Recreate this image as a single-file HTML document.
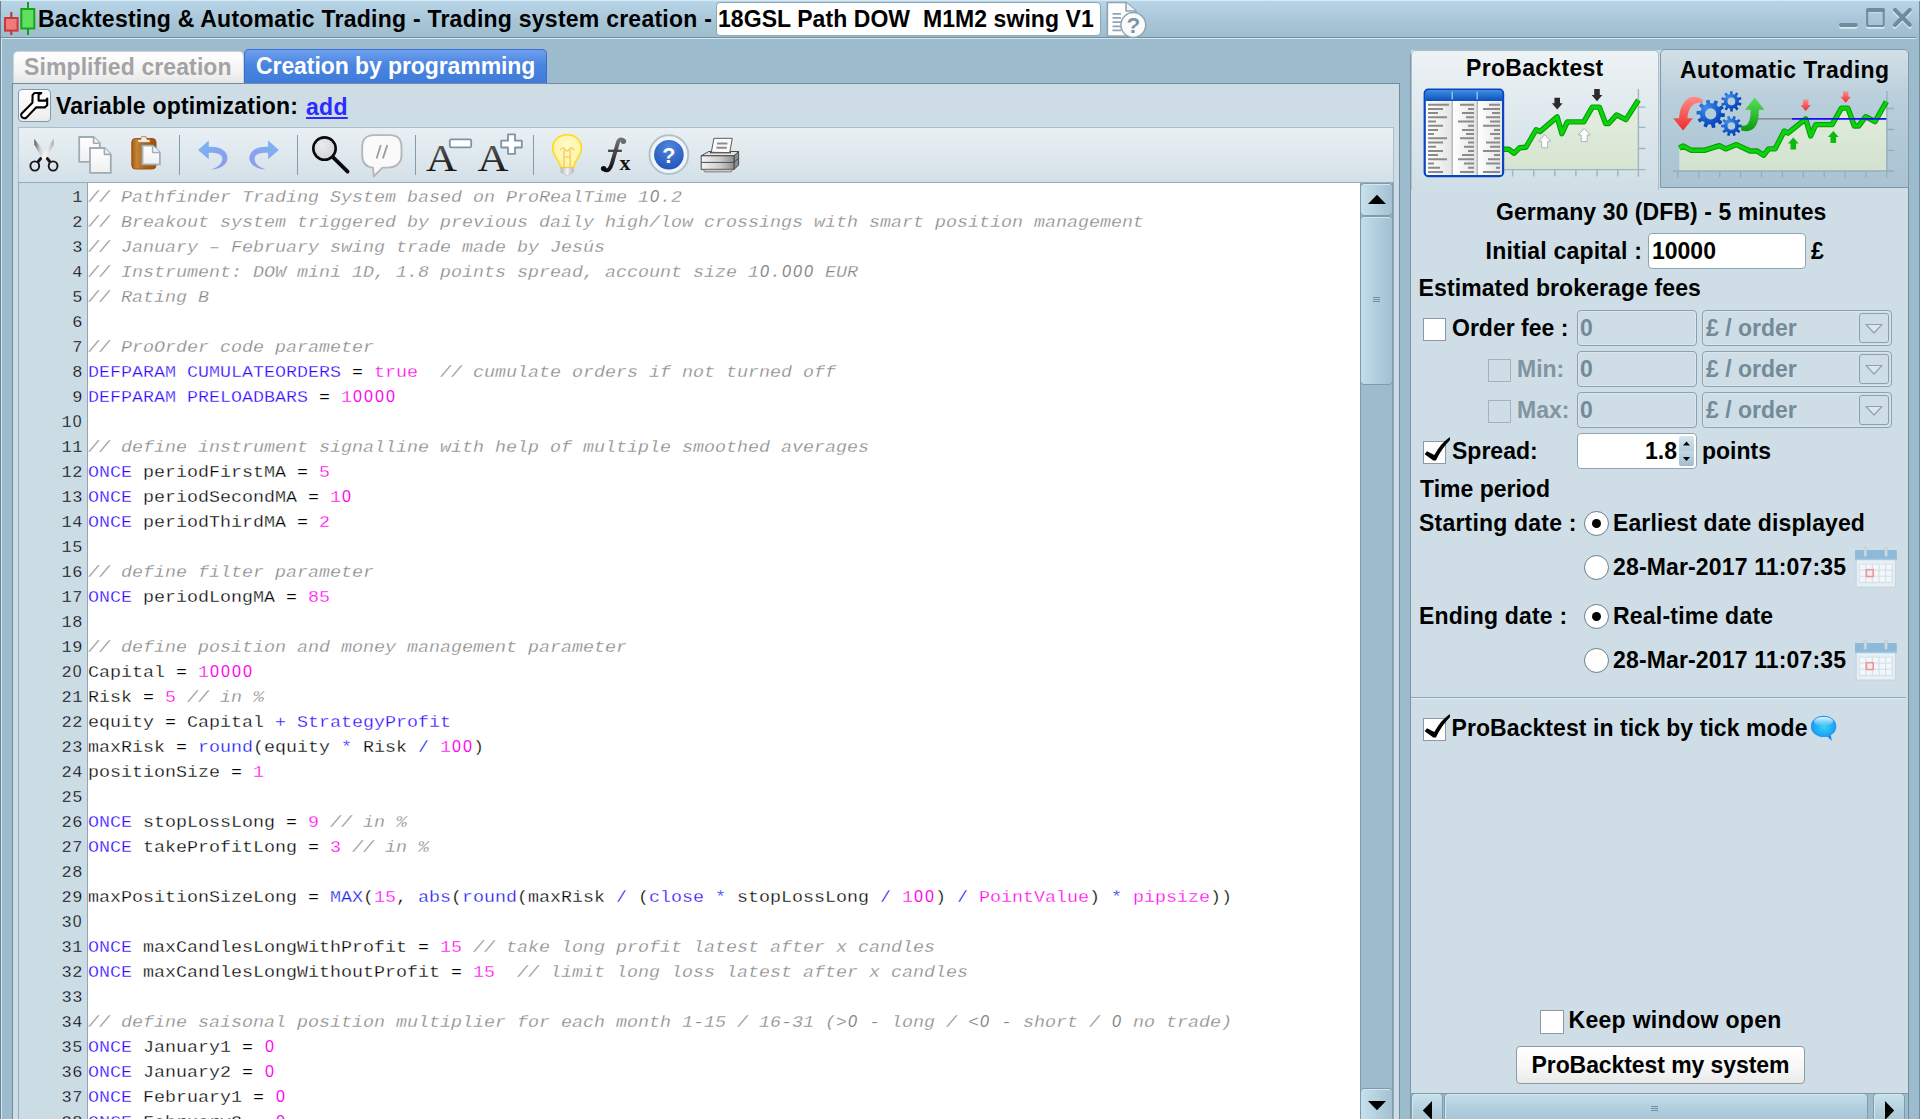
<!DOCTYPE html>
<html><head><meta charset="utf-8"><title>Backtesting</title>
<style>
*{box-sizing:border-box;margin:0;padding:0}
html,body{width:1920px;height:1119px;overflow:hidden;background:#9cbbcc;font-family:"Liberation Sans",sans-serif;}
.abs{position:absolute}
.b{font-weight:bold;font-size:23px;color:#000;white-space:pre;position:absolute;line-height:26px;height:26px}
#titlebar{position:absolute;left:0;top:0;width:1920px;height:37px;background:linear-gradient(#b9d7e9 0%,#b4d2e4 15%,#a8c6d8 55%,#9dbdcc 100%);}
#titleline{position:absolute;left:0;top:37px;width:1920px;height:1px;background:#748c9c}
#titleline2{position:absolute;left:0;top:38px;width:1920px;height:1px;background:#d2e9f4}
#lpanel{position:absolute;left:12px;top:83px;width:1388px;height:1040px;background:#cedde5;border:1px solid #728c9b;border-top-color:#758e9d}
#toolbar{position:absolute;left:18px;top:127px;width:1376px;height:56px;border:1px solid #a9bfcc;border-bottom:none;background:linear-gradient(#e9f0f4,#d3e0e7)}
#editor{position:absolute;left:18px;top:182px;width:1376px;height:940px;border:1px solid #94adbb;background:#fff}
#gutter{position:absolute;left:19px;top:183px;width:69px;height:940px;background:#ccdce4;border-right:1px solid #8da7b6}
.ln{position:absolute;left:19px;width:64px;text-align:right;font-family:"Liberation Mono",monospace;font-size:17px;line-height:25px;height:25px;color:#000;letter-spacing:0.6px;-webkit-text-stroke:0.3px #ccdce4;paint-order:fill stroke}
.cl{position:absolute;left:88px;font-family:"Liberation Mono",monospace;font-size:18.33px;line-height:25px;height:25px;white-space:pre;color:#000;transform:scaleY(0.86);transform-origin:0 17.4px;-webkit-text-stroke:0.3px #fff;paint-order:fill stroke}
.zl{display:inline-block;width:10.2px;margin-right:0.6px;text-align:center;font-family:"Liberation Sans",sans-serif;font-size:16.6px;line-height:1;letter-spacing:0;transform:scaleX(0.95)}
.z{display:inline-block;width:11px;text-align:center;font-family:"Liberation Sans",sans-serif;font-size:19.2px;line-height:1;transform:scaleX(0.84);-webkit-text-stroke:0 transparent}
.c{color:#858585;font-style:italic}
.k{color:#3208ff}
.f{color:#1616f2}
.n{color:#ff04ee}
#rpanel{position:absolute;left:1411px;top:50px;width:497px;height:1075px;background:#cfdee6}
</style></head><body>
<!-- TITLE BAR -->
<div id="titlebar"></div><div id="titleline"></div><div id="titleline2"></div>
<div class="abs" style="left:0;top:0;width:1px;height:1119px;background:#69828f"></div>
<div class="abs" style="left:1px;top:38px;width:1px;height:1081px;background:#cfeaf6"></div>
<svg class="abs" style="left:0;top:0" width="40" height="38" viewBox="0 0 40 38">
 <rect x="10.3" y="12" width="2" height="23" fill="#c23030"/>
 <rect x="5" y="18" width="12.6" height="12.6" fill="#f27a7a" stroke="#c73a3a" stroke-width="2"/>
 <rect x="27" y="2" width="2" height="33" fill="#14a014"/>
 <rect x="21.3" y="9" width="13" height="19.5" fill="#5fe05f" stroke="#18a318" stroke-width="2"/>
</svg>
<div class="b" id="ttl" style="left:38px;top:6px;letter-spacing:0.24px">Backtesting &amp; Automatic Trading - Trading system creation -</div>
<div class="abs" style="left:716px;top:2px;width:385px;height:34px;background:#fff;border:1px solid #8ea6b4;border-radius:4px"></div>
<div class="b" style="left:718px;top:6px;letter-spacing:0.06px">18GSL Path DOW  M1M2 swing V1</div>
<!-- doc-help icon -->
<svg class="abs" style="left:1100px;top:0" width="56" height="40" viewBox="1100 0 56 40">
 <path d="M1107.3 2.5 H1126 L1136 11 V36 H1107.3 Z" fill="#fdfdfd" stroke="#8fa5b2" stroke-width="1.7" stroke-linejoin="round"/>
 <path d="M1126 2.5 V11 H1136" fill="#eef2f4" stroke="#8fa5b2" stroke-width="1.6" stroke-linejoin="round"/>
 <g stroke="#8fa5b2" stroke-width="1.7"><path d="M1112.5 13.8H1121M1112.5 17.9H1121M1112.5 22.1H1121M1112.5 26.3H1121M1112.5 30.4H1121"/></g>
 <circle cx="1133.3" cy="25" r="12.4" fill="#fbfbfb" stroke="#8fa5b2" stroke-width="1.5"/>
 <text x="1133.4" y="33.2" font-family="Liberation Sans" font-weight="bold" font-size="22.5" fill="#7d95a3" text-anchor="middle">?</text>
</svg>
<!-- window buttons -->
<svg class="abs" style="left:1830px;top:0" width="90" height="38" viewBox="1830 0 90 38">
 <g transform="translate(0,1.7)" fill="#d6ebf5" stroke="#d6ebf5">
  <rect x="1839" y="23" width="18.8" height="4" rx="2" stroke="none"/>
  <rect x="1867.2" y="9.6" width="16.5" height="16.4" rx="1.5" fill="none" stroke-width="2.2"/>
  <path d="M1895 9.9 L1909.8 25 M1909.8 9.9 L1895 25" stroke-width="4" stroke-linecap="round" fill="none"/>
 </g>
 <rect x="1839" y="23" width="18.8" height="4.1" rx="2" fill="#728b9b"/>
 <rect x="1867.2" y="9.6" width="16.5" height="16.4" rx="1.5" fill="none" stroke="#728b9b" stroke-width="2.2"/>
 <rect x="1866.1" y="8.1" width="18.7" height="4" rx="1.5" fill="#728b9b"/>
 <path d="M1895 9.9 L1909.8 25 M1909.8 9.9 L1895 25" stroke="#728b9b" stroke-width="4" stroke-linecap="round"/>
</svg>
<div class="abs" style="left:1919px;top:0;width:1px;height:1119px;background:#728d9e"></div>
<div class="abs" style="left:1916px;top:37px;width:3px;height:2px;background:#a3c0d2"></div>
<div class="abs" style="left:0;top:0;width:1920px;height:1px;background:#d3eaf6"></div>
<!-- LEFT TABS -->
<div class="abs" style="left:13px;top:51px;width:231px;height:32px;border:1px solid #c9d3d9;border-bottom:none;border-radius:5px 5px 0 0;background:linear-gradient(#ffffff,#f4f4f4 60%,#e6e6e6)"></div>
<div class="b" style="left:24px;top:54px;color:#a3a3a3;letter-spacing:0.1px">Simplified creation</div>
<div class="abs" style="left:244px;top:49px;width:303px;height:34px;border:1px solid #3a6fd0;border-bottom:none;border-radius:5px 5px 0 0;background:linear-gradient(#6ea0ee,#4a85e0 45%,#3f7bda)"></div>
<div class="b" style="left:256px;top:53px;color:#fff;letter-spacing:-0.08px">Creation by programming</div>
<!-- LEFT PANEL -->
<div id="lpanel"></div>
<div class="abs" style="left:18px;top:89px;width:33px;height:33px;border:1px solid #7f9aaa;border-radius:4px;background:linear-gradient(#ffffff,#f6f6f6 50%,#ececec)"></div>
<svg class="abs" style="left:18px;top:89px" width="33" height="33" viewBox="18 89 33 33">
 <path d="M21.7 113.5 L32.4 102.8 L32.6 95 L34.6 93 L41.3 93 L38.6 94.6 L38.6 100.6 L45.6 100.6 L47.2 98.6 L47.2 105.3 L44.7 107.4 L36.3 107.2 L26.4 117.6 C24.5 119 22 118 21.3 116 C21 115 21.2 114 21.7 113.5 Z" fill="#fff" stroke="#000" stroke-width="2.1" stroke-linejoin="round"/>
</svg>
<div class="b" style="left:56px;top:93px;letter-spacing:0.2px">Variable optimization:</div>
<div class="b" style="left:306px;top:94px;color:#2b2bff;text-decoration:underline;letter-spacing:0.3px">add</div>
<div id="toolbar"></div>
<div id="editor"></div>
<div id="gutter"></div>
<div class="ln" style="top:185px">1</div><div class="cl" style="top:185px"><span class="c">// Pathfinder Trading System based on ProRealTime 1<span class="z">0</span>.2</span></div>
<div class="ln" style="top:210px">2</div><div class="cl" style="top:210px"><span class="c">// Breakout system triggered by previous daily high/low crossings with smart position management</span></div>
<div class="ln" style="top:235px">3</div><div class="cl" style="top:235px"><span class="c">// January – February swing trade made by Jesús</span></div>
<div class="ln" style="top:260px">4</div><div class="cl" style="top:260px"><span class="c">// Instrument: DOW mini 1D, 1.8 points spread, account size 1<span class="z">0</span>.<span class="z">0</span><span class="z">0</span><span class="z">0</span> EUR</span></div>
<div class="ln" style="top:285px">5</div><div class="cl" style="top:285px"><span class="c">// Rating B</span></div>
<div class="ln" style="top:310px">6</div><div class="cl" style="top:310px"></div>
<div class="ln" style="top:335px">7</div><div class="cl" style="top:335px"><span class="c">// ProOrder code parameter</span></div>
<div class="ln" style="top:360px">8</div><div class="cl" style="top:360px"><span class="k">DEFPARAM</span> <span class="k">CUMULATEORDERS</span> = <span class="n">true</span>  <span class="c">// cumulate orders if not turned off</span></div>
<div class="ln" style="top:385px">9</div><div class="cl" style="top:385px"><span class="k">DEFPARAM</span> <span class="k">PRELOADBARS</span> = <span class="n">1<span class="z">0</span><span class="z">0</span><span class="z">0</span><span class="z">0</span></span></div>
<div class="ln" style="top:410px">1<span class="zl">0</span></div><div class="cl" style="top:410px"></div>
<div class="ln" style="top:435px">11</div><div class="cl" style="top:435px"><span class="c">// define instrument signalline with help of multiple smoothed averages</span></div>
<div class="ln" style="top:460px">12</div><div class="cl" style="top:460px"><span class="k">ONCE</span> periodFirstMA = <span class="n">5</span></div>
<div class="ln" style="top:485px">13</div><div class="cl" style="top:485px"><span class="k">ONCE</span> periodSecondMA = <span class="n">1<span class="z">0</span></span></div>
<div class="ln" style="top:510px">14</div><div class="cl" style="top:510px"><span class="k">ONCE</span> periodThirdMA = <span class="n">2</span></div>
<div class="ln" style="top:535px">15</div><div class="cl" style="top:535px"></div>
<div class="ln" style="top:560px">16</div><div class="cl" style="top:560px"><span class="c">// define filter parameter</span></div>
<div class="ln" style="top:585px">17</div><div class="cl" style="top:585px"><span class="k">ONCE</span> periodLongMA = <span class="n">85</span></div>
<div class="ln" style="top:610px">18</div><div class="cl" style="top:610px"></div>
<div class="ln" style="top:635px">19</div><div class="cl" style="top:635px"><span class="c">// define position and money management parameter</span></div>
<div class="ln" style="top:660px">2<span class="zl">0</span></div><div class="cl" style="top:660px">Capital = <span class="n">1<span class="z">0</span><span class="z">0</span><span class="z">0</span><span class="z">0</span></span></div>
<div class="ln" style="top:685px">21</div><div class="cl" style="top:685px">Risk = <span class="n">5</span> <span class="c">// in %</span></div>
<div class="ln" style="top:710px">22</div><div class="cl" style="top:710px">equity = Capital <span class="f">+</span> <span class="k">StrategyProfit</span></div>
<div class="ln" style="top:735px">23</div><div class="cl" style="top:735px">maxRisk = <span class="f">round</span>(equity <span class="f">*</span> Risk <span class="f">/</span> <span class="n">1<span class="z">0</span><span class="z">0</span></span>)</div>
<div class="ln" style="top:760px">24</div><div class="cl" style="top:760px">positionSize = <span class="n">1</span></div>
<div class="ln" style="top:785px">25</div><div class="cl" style="top:785px"></div>
<div class="ln" style="top:810px">26</div><div class="cl" style="top:810px"><span class="k">ONCE</span> stopLossLong = <span class="n">9</span> <span class="c">// in %</span></div>
<div class="ln" style="top:835px">27</div><div class="cl" style="top:835px"><span class="k">ONCE</span> takeProfitLong = <span class="n">3</span> <span class="c">// in %</span></div>
<div class="ln" style="top:860px">28</div><div class="cl" style="top:860px"></div>
<div class="ln" style="top:885px">29</div><div class="cl" style="top:885px">maxPositionSizeLong = <span class="f">MAX</span>(<span class="n">15</span>, <span class="f">abs</span>(<span class="f">round</span>(maxRisk <span class="f">/</span> (<span class="k">close</span> <span class="f">*</span> stopLossLong <span class="f">/</span> <span class="n">1<span class="z">0</span><span class="z">0</span></span>) <span class="f">/</span> <span class="n">PointValue</span>) <span class="f">*</span> <span class="n">pipsize</span>))</div>
<div class="ln" style="top:910px">3<span class="zl">0</span></div><div class="cl" style="top:910px"></div>
<div class="ln" style="top:935px">31</div><div class="cl" style="top:935px"><span class="k">ONCE</span> maxCandlesLongWithProfit = <span class="n">15</span> <span class="c">// take long profit latest after x candles</span></div>
<div class="ln" style="top:960px">32</div><div class="cl" style="top:960px"><span class="k">ONCE</span> maxCandlesLongWithoutProfit = <span class="n">15</span>  <span class="c">// limit long loss latest after x candles</span></div>
<div class="ln" style="top:985px">33</div><div class="cl" style="top:985px"></div>
<div class="ln" style="top:1010px">34</div><div class="cl" style="top:1010px"><span class="c">// define saisonal position multiplier for each month 1-15 / 16-31 (&gt;<span class="z">0</span> - long / &lt;<span class="z">0</span> - short / <span class="z">0</span> no trade)</span></div>
<div class="ln" style="top:1035px">35</div><div class="cl" style="top:1035px"><span class="k">ONCE</span> January1 = <span class="n"><span class="z">0</span></span></div>
<div class="ln" style="top:1060px">36</div><div class="cl" style="top:1060px"><span class="k">ONCE</span> January2 = <span class="n"><span class="z">0</span></span></div>
<div class="ln" style="top:1085px">37</div><div class="cl" style="top:1085px"><span class="k">ONCE</span> February1 = <span class="n"><span class="z">0</span></span></div>
<div class="ln" style="top:1110px">38</div><div class="cl" style="top:1110px"><span class="k">ONCE</span> February2 = <span class="n"><span class="z">0</span></span></div>
<!-- EDITOR V-SCROLLBAR -->
<div class="abs" style="left:1360px;top:183px;width:33px;height:940px;background:#9ebbcd;border-left:1px solid #7f9aab;border-right:1px solid #7f9aab"></div>
<div class="abs" style="left:1360px;top:183px;width:33px;height:33px;border:1px solid #7f9aab;border-radius:4px;background:linear-gradient(90deg,#c6e0ec,#b5d1df 50%,#a3c1d2);box-shadow:inset 0 1px 0 #d3e7f0"></div>
<svg class="abs" style="left:1360px;top:183px" width="33" height="33"><path d="M8 21 L17 11.8 L26 21 Z" fill="#000"/></svg>
<div class="abs" style="left:1360px;top:216px;width:33px;height:169px;border:1px solid #7f9aab;border-radius:4px;background:linear-gradient(90deg,#c2ddea,#b1cedd 50%,#a2c0d1);box-shadow:inset 0 1px 0 #d3e7f0"></div>
<svg class="abs" style="left:1372px;top:295px" width="10" height="10"><path d="M1 2.5H8M1 4.5H8M1 6.5H8" stroke="#6f8fa3" stroke-width="1"/></svg>
<div class="abs" style="left:1360px;top:1088px;width:33px;height:36px;border:1px solid #7f9aab;border-radius:4px;background:linear-gradient(90deg,#c6e0ec,#b5d1df 50%,#a3c1d2);box-shadow:inset 0 1px 0 #d3e7f0"></div>
<svg class="abs" style="left:1360px;top:1088px" width="33" height="31"><path d="M8 13 L26 13 L17 22.2 Z" fill="#000"/></svg>
<!-- panel borders -->
<div class="abs" style="left:1399px;top:83px;width:1px;height:1040px;background:#728c9b"></div>
<div class="abs" style="left:1410px;top:54px;width:1px;height:1069px;background:#7d97a8"></div>
<div class="abs" style="left:1908px;top:54px;width:1px;height:1069px;background:#728c9b"></div>
<!-- TOOLBAR ICONS -->
<svg class="abs" style="left:19px;top:128px" width="740" height="54" viewBox="19 128 740 54">
 <defs>
  <linearGradient id="bladeL" x1="0" y1="0" x2="1" y2="0"><stop offset="0" stop-color="#5a5a5a"/><stop offset="0.45" stop-color="#c9c9c9"/><stop offset="1" stop-color="#ffffff"/></linearGradient>
  <linearGradient id="bladeR" x1="0" y1="0" x2="1" y2="0"><stop offset="0" stop-color="#ffffff"/><stop offset="0.6" stop-color="#e2e2e2"/><stop offset="1" stop-color="#a8a8a8"/></linearGradient>
  <linearGradient id="pg" x1="0" y1="0" x2="0" y2="1"><stop offset="0" stop-color="#ffffff"/><stop offset="1" stop-color="#f0f0f0"/></linearGradient>
  <linearGradient id="clip" x1="0" y1="0" x2="1" y2="0"><stop offset="0" stop-color="#a8580e"/><stop offset="0.2" stop-color="#c28538"/><stop offset="0.5" stop-color="#ad651a"/><stop offset="1" stop-color="#9a500b"/></linearGradient>
  <linearGradient id="ublue" x1="0" y1="0" x2="1" y2="1"><stop offset="0" stop-color="#74b8f2"/><stop offset="0.5" stop-color="#86a6f0"/><stop offset="1" stop-color="#8f98f0"/></linearGradient>
  <linearGradient id="ublue2" x1="1" y1="0" x2="0" y2="1"><stop offset="0" stop-color="#74b8f2"/><stop offset="0.5" stop-color="#86a6f0"/><stop offset="1" stop-color="#8f98f0"/></linearGradient>
  <radialGradient id="lens" cx="0.4" cy="0.35" r="0.9"><stop offset="0" stop-color="#e9ecee"/><stop offset="1" stop-color="#c4cdd2"/></radialGradient>
  <linearGradient id="agrad" x1="0" y1="0" x2="0" y2="1"><stop offset="0" stop-color="#6e6e6e"/><stop offset="1" stop-color="#000"/></linearGradient>
  <linearGradient id="fgrad" gradientUnits="userSpaceOnUse" x1="0" y1="138" x2="0" y2="172"><stop offset="0" stop-color="#767676"/><stop offset="1" stop-color="#0a0a0a"/></linearGradient>
  <radialGradient id="helpg" cx="0.5" cy="0.25" r="0.85"><stop offset="0" stop-color="#4f86dc"/><stop offset="1" stop-color="#1c4fb8"/></radialGradient>
  <linearGradient id="prn" x1="0" y1="0" x2="1" y2="0"><stop offset="0" stop-color="#f6f6f6"/><stop offset="0.6" stop-color="#c9c9c9"/><stop offset="1" stop-color="#8e8e8e"/></linearGradient>
  <radialGradient id="bulb" cx="0.5" cy="0.4" r="0.6"><stop offset="0" stop-color="#fffbd2"/><stop offset="1" stop-color="#fdf29a"/></radialGradient>
  <linearGradient id="base" x1="0" y1="0" x2="1" y2="0"><stop offset="0" stop-color="#b9b9b9"/><stop offset="0.5" stop-color="#f2f2f2"/><stop offset="1" stop-color="#b9b9b9"/></linearGradient>
 </defs>
 <!-- scissors -->
 <path d="M34.3 138.8 L34.3 144.4 L41.2 156.6 L45.4 159 L45.9 153.8 Z" fill="url(#bladeL)"/>
 <path d="M53.6 138.6 L53.7 144.4 L46.6 158.6 L42.2 159.2 L43.2 154.4 Z" fill="url(#bladeR)"/>
 <path d="M40.6 158.6 L38.2 161.6 M47.4 158.6 L49.8 161.6" stroke="#161616" stroke-width="3" stroke-linecap="round"/>
 <ellipse cx="34.8" cy="166" rx="4.4" ry="4.6" fill="none" stroke="#161616" stroke-width="1.9"/>
 <ellipse cx="53.1" cy="166" rx="4.4" ry="4.6" fill="none" stroke="#161616" stroke-width="1.9"/>
 <!-- copy -->
 <path d="M79.2 137 H93.6 L99.8 143.2 V161.8 H79.2 Z" fill="url(#pg)" stroke="#9eacb4" stroke-width="1.8"/>
 <path d="M93.6 137 V143.2 H99.8" fill="#f4f6f7" stroke="#9eacb4" stroke-width="1.6" stroke-linejoin="round"/>
 <path d="M90 148 H104.4 L110.8 154.4 V172.8 H90 Z" fill="url(#pg)" stroke="#9eacb4" stroke-width="1.8"/>
 <path d="M104.4 148 V154.4 H110.8" fill="#f4f6f7" stroke="#9eacb4" stroke-width="1.6" stroke-linejoin="round"/>
 <!-- paste -->
 <rect x="131.8" y="138.5" width="24.2" height="30.5" rx="3.6" fill="url(#clip)" stroke="#a2540a" stroke-width="1"/>
 <path d="M137.6 142.4 V139.6 H140.6 L141.6 136.6 H146 L147 139.6 H150 V142.4 Z" fill="#e9eef1" stroke="#b0651c" stroke-width=".7"/>
 <path d="M142.5 145.6 H152.6 L159.9 152.4 V164.3 H142.5 Z" fill="url(#pg)" stroke="#9fb1be" stroke-width="1.8"/>
 <path d="M152.6 145.6 V152.4 H159.9" fill="#f4f6f7" stroke="#9fb1be" stroke-width="1.5" stroke-linejoin="round"/>
 <!-- separators -->
 <g stroke="#7f9dae" stroke-width="1"><path d="M179.5 135V175M297.5 135V175M415.5 135V175M533.5 135V175"/></g>
 <!-- undo -->
 <path d="M198.1 150 L208.75 140.6 L208.75 146.8 C220 146 227.5 151 227.5 158 C227.5 165 219 169.5 210.6 169.5 C217.5 168 222.5 163.5 222.3 158.5 C222 154 216 152.5 208.75 152.8 L208.75 159.3 Z" fill="url(#ublue)"/>
 <!-- redo -->
 <path d="M278.8 150 L268.15 140.6 L268.15 146.8 C256.9 146 249.4 151 249.4 158 C249.4 165 257.9 169.5 266.3 169.5 C259.4 168 254.4 163.5 254.6 158.5 C254.9 154 260.9 152.5 268.15 152.8 L268.15 159.3 Z" fill="url(#ublue2)"/>
 <!-- magnifier -->
 <circle cx="324.5" cy="148.6" r="11.2" fill="url(#lens)" stroke="#0a0a0a" stroke-width="2.6"/>
 <path d="M333.4 157.6 L347.6 171.6" stroke="#0a0a0a" stroke-width="3.8" stroke-linecap="round"/>
 <!-- comment bubble -->
 <path d="M374 135.1 H390 C397.5 135.1 401.5 139.5 401.5 147 V155 C401.5 163 396 167.6 388 167.6 H382.5 L373.9 176.4 L373 167.6 C366 167 362.2 162.5 362.2 155 V147 C362.2 139.5 366.5 135.1 374 135.1 Z" fill="#fafafa" stroke="#b4b7ba" stroke-width="1.9" stroke-linejoin="round"/>
 <path d="M376.6 158.4 L380.8 145.1 M382.9 158.4 L387.3 145.1" stroke="#9c9c9c" stroke-width="1.8"/>
 <!-- A- -->
 <text x="426" y="171.3" font-family="Liberation Serif" font-size="38.5" fill="url(#agrad)" textLength="31" lengthAdjust="spacingAndGlyphs">A</text>
 <rect x="449.8" y="139.4" width="21.4" height="8" rx="1.5" fill="#fff" stroke="#7a96a6" stroke-width="1.8"/>
 <!-- A+ -->
 <text x="477.5" y="171.3" font-family="Liberation Serif" font-size="38.5" fill="url(#agrad)" textLength="31" lengthAdjust="spacingAndGlyphs">A</text>
 <path d="M508 134.4 H515 V140.7 H521.8 V147.5 H515 V153.8 H508 V147.5 H501.2 V140.7 H508 Z" fill="#fff" stroke="#7a96a6" stroke-width="1.8" stroke-linejoin="round"/>
 <!-- bulb -->
 <path d="M567.1 134.7 C576 134.7 581.5 141 581.5 148 C581.5 156 574.6 160 573.6 167.5 H560.6 C559.6 160 552.7 156 552.7 148 C552.7 141 558.2 134.7 567.1 134.7 Z" fill="url(#bulb)" stroke="#ffd91e" stroke-width="1.6"/>
 <path d="M559.8 149.8 C561.5 149.8 561.8 147.8 563.2 147.8 C565 147.8 565.4 151.2 567.2 151.2 C569 151.2 569.4 147.8 571.2 147.8 C572.6 147.8 572.9 149.8 574.6 149.8 M564 150 V167 M570.2 150 V167 M564 157 H570.2" stroke="#f5d568" stroke-width="1.7" fill="none"/>
 <path d="M560.9 167.8 H573.4 V172.4 L567.1 175.8 L560.9 172.4 Z" fill="url(#base)" stroke="#bdbdbd" stroke-width=".6"/>
 <!-- fx -->
 <path d="M623.2 141.6 C622.8 138.4 618.9 138.6 617.9 142.6 L611.9 163.6 C610.6 168.6 607.6 172.2 604 169.2" fill="none" stroke="url(#fgrad)" stroke-width="3.9" stroke-linecap="round"/>
 <circle cx="623.4" cy="141.3" r="2.7" fill="#6c6c6c"/><circle cx="603.6" cy="168.6" r="2.7" fill="#0a0a0a"/>
 <path d="M608 150.8 H621.8" stroke="#444" stroke-width="2.3"/>
 <text x="619.6" y="169.6" font-family="Liberation Serif" font-weight="bold" font-size="22" fill="#141414">x</text>
 <!-- help -->
 <circle cx="668.9" cy="154.7" r="19.4" fill="#f2f5f7" stroke="#b2c2cc" stroke-width="2"/>
 <circle cx="668.9" cy="154.7" r="14.8" fill="url(#helpg)"/>
 <text x="668.9" y="163" font-family="Liberation Sans" font-weight="bold" font-size="21.5" fill="#fff" text-anchor="middle">?</text>
 <!-- printer -->
 <path d="M701.2 155.8 L708.8 151.5 H738.6 L734 155.8 Z" fill="#e4e4e4" stroke="#4a4a4a" stroke-width="1" stroke-linejoin="round"/>
 <path d="M734 155.8 L738.6 151.5 V165.2 L734 169.3 Z" fill="#8c8c8c" stroke="#4a4a4a" stroke-width="1" stroke-linejoin="round"/>
 <rect x="701.2" y="155.8" width="32.8" height="13.5" fill="url(#prn)" stroke="#4a4a4a" stroke-width="1"/>
 <path d="M701.2 162.4 H734 L738.6 158.2" fill="none" stroke="#4a4a4a" stroke-width="1"/>
 <path d="M703.6 169.6 H732.4 L731.4 171.9 H704.6 Z" fill="#cfcfcf" stroke="#6a6a6a" stroke-width=".8"/>
 <path d="M710 152.6 H731" stroke="#3a3a3a" stroke-width="1.4"/>
 <path d="M711.3 152.3 L713.9 138.3 L732.3 138.3 L729.7 152.6 Z" fill="#fafafa" stroke="#5c5c5c" stroke-width="1" stroke-linejoin="round"/>
 <path d="M717 143.5 H727.4 M716.4 147.8 H726.8" stroke="#8c8c8c" stroke-width="1.9"/>
</svg>
<!-- RIGHT PANEL -->
<div id="rpanel"></div>
<!-- tabs -->
<div class="abs" style="left:1411px;top:50px;width:248px;height:140px;border:1px solid #aebfca;border-bottom:none;border-radius:5px 5px 0 0;background:linear-gradient(#edf2f5,#dfe9ee 45%,#cfdee6)"></div>
<div class="abs" style="left:1660px;top:49px;width:249px;height:139px;border:1px solid #7d98a9;border-radius:5px 5px 0 0;background:linear-gradient(#d2e0e8,#b9cfdb 35%,#a9c3d2)"></div>
<div class="b" style="left:1466px;top:55px;letter-spacing:0.3px">ProBacktest</div>
<div class="b" style="left:1680px;top:57px;letter-spacing:0.45px">Automatic Trading</div>
<!-- ProBacktest chart -->
<svg class="abs" style="left:1411px;top:50px" width="248" height="138" viewBox="1411 50 248 138">
 <defs>
  <linearGradient id="tblh" x1="0" y1="0" x2="0" y2="1"><stop offset="0" stop-color="#3f8fe0"/><stop offset="1" stop-color="#0b4fc0"/></linearGradient>
  <linearGradient id="gfill" x1="0" y1="0" x2="0" y2="1"><stop offset="0" stop-color="#e6efe2"/><stop offset="1" stop-color="#d5e4cf"/></linearGradient>
  <linearGradient id="tcol" x1="0" y1="0" x2="1" y2="0"><stop offset="0" stop-color="#ffffff"/><stop offset="1" stop-color="#e4e4e4"/></linearGradient>
 </defs>
 <path d="M1503.75 149.3 L1508.75 149.3 L1514.2 153.2 L1519.7 147.7 L1525.9 147.25 L1536.1 129.75 L1540 131.6 L1557.2 116.9 L1561.9 133.7 L1567.3 121.9 L1583.75 121.9 L1592.3 107.1 L1599.4 107.1 L1605.6 123.5 L1608.75 123.5 L1616.6 114.9 L1625.9 119.6 L1638.4 100 L1638.4 169.6 L1503.75 169.6 Z" fill="url(#gfill)"/>
 <g stroke="#9fb4c0" stroke-width="1.4" fill="none">
  <path d="M1638.4 89 V176.6"/><path d="M1504 169.6 H1645.5"/>
  <path d="M1512.6 169.6V176.6M1533.75 169.6V176.6M1554.8 169.6V176.6M1575.9 169.6V176.6M1597 169.6V176.6M1617.8 169.6V176.6"/>
  <path d="M1638.4 107.1H1645.5M1638.4 127.4H1645.5M1638.4 148.5H1645.5"/>
 </g>
 <path d="M1503.75 149.3 L1508.75 149.3 L1514.2 153.2 L1519.7 147.7 L1525.9 147.25 L1536.1 129.75 L1540 131.6 L1557.2 116.9 L1561.9 133.7 L1567.3 121.9 L1583.75 121.9 L1592.3 107.1 L1599.4 107.1 L1605.6 123.5 L1608.75 123.5 L1616.6 114.9 L1625.9 119.6 L1638.4 100" fill="none" stroke="#089c08" stroke-width="5.4" stroke-linejoin="round"/>
 <path d="M1503.75 149.3 L1508.75 149.3 L1514.2 153.2 L1519.7 147.7 L1525.9 147.25 L1536.1 129.75 L1540 131.6 L1557.2 116.9 L1561.9 133.7 L1567.3 121.9 L1583.75 121.9 L1592.3 107.1 L1599.4 107.1 L1605.6 123.5 L1608.75 123.5 L1616.6 114.9 L1625.9 119.6 L1638.4 100" fill="none" stroke="#0cd40c" stroke-width="3.2" stroke-linejoin="round"/>
 <!-- black arrows -->
 <path d="M1554.4 97.7 h5.6 v5.6 h2.6 l-5.4 6.1 l-5.4 -6.1 h2.6 z" fill="#2b2b2b"/>
 <path d="M1594.2 89.1 h5.6 v5.8 h2.6 l-5.4 6.4 l-5.4 -6.4 h2.6 z" fill="#2b2b2b"/>
 <!-- white arrows -->
 <path d="M1544.7 134.6 l6 6.6 h-3 v6.6 h-6 v-6.6 h-3 z" fill="#fff" stroke="#aab4ba" stroke-width="1"/>
 <path d="M1584.2 128.4 l6 6.6 h-3 v6.6 h-6 v-6.6 h-3 z" fill="#fff" stroke="#aab4ba" stroke-width="1"/>
 <!-- table icon -->
 <rect x="1424.7" y="89.7" width="78.4" height="86.4" rx="3.5" fill="#fff" stroke="#0a43c0" stroke-width="2.2"/>
 <path d="M1425.5 101 V93 a3 3 0 0 1 3 -3 h71 a3 3 0 0 1 3 3 V101 Z" fill="url(#tblh)"/>
 <rect x="1426" y="101.5" width="25.5" height="73" fill="url(#tcol)"/>
 <rect x="1453" y="101.5" width="23.5" height="73" fill="url(#tcol)"/>
 <rect x="1478" y="101.5" width="24" height="73" fill="url(#tcol)"/>
 <path d="M1452.2 101 V175 M1477.2 101 V175" stroke="#a9b3b9" stroke-width="1.4"/>
 <path d="M1452.2 91.5 V99.5 M1477.2 91.5 V99.5" stroke="#9cc0ec" stroke-width="1.4"/>
 <g stroke="#8b8b8b" stroke-width="2">
  <path d="M1428 104.7h21M1428 108.9h15M1428 113.1h10M1428 117.3h19M1428 121.5h8M1428 125.7h15M1428 129.9h10M1428 134.1h6M1428 138.3h19M1428 142.5h15M1428 146.7h8M1428 150.9h15M1428 155.1h10M1428 159.3h19M1428 163.5h6M1428 167.7h12M1428 171.9h15"/>
  <path d="M1474 104.7h-14M1474 108.9h-6M1474 113.1h-12M1474 117.3h-8M1474 121.5h-16M1474 125.7h-6M1474 129.9h-12M1474 134.1h-8M1474 138.3h-14M1474 142.5h-6M1474 146.7h-10M1474 150.9h-6M1474 155.1h-12M1474 159.3h-16M1474 163.5h-10M1474 167.7h-6M1474 171.9h-14"/>
  <path d="M1500 104.7h-11M1500 108.9h-17M1500 113.1h-8M1500 117.3h-14M1500 121.5h-10M1500 125.7h-17M1500 129.9h-6M1500 134.1h-10M1500 138.3h-6M1500 142.5h-14M1500 146.7h-10M1500 150.9h-17M1500 155.1h-6M1500 159.3h-12M1500 163.5h-14M1500 167.7h-4M1500 171.9h-17"/>
 </g>
</svg>
<!-- Automatic Trading chart -->
<svg class="abs" style="left:1660px;top:50px" width="249" height="138" viewBox="1660 50 249 138">
 <defs>
  <linearGradient id="gfill2" x1="0" y1="0" x2="0" y2="1"><stop offset="0" stop-color="#e3ecdf"/><stop offset="1" stop-color="#d3e2cf"/></linearGradient>
  <radialGradient id="gearg" cx="0.35" cy="0.3" r="0.9"><stop offset="0" stop-color="#3f8de8"/><stop offset="0.6" stop-color="#0b4fc4"/><stop offset="1" stop-color="#0a2f98"/></radialGradient>
  <linearGradient id="redg" x1="0" y1="0" x2="0" y2="1"><stop offset="0" stop-color="#ff8c8c"/><stop offset="1" stop-color="#f02a2a"/></linearGradient>
  <linearGradient id="grng" x1="0" y1="0" x2="0" y2="1"><stop offset="0" stop-color="#5ae05a"/><stop offset="1" stop-color="#0a9a0a"/></linearGradient>
 </defs>
 <path d="M1679.3 148.1 L1682.9 146 L1691.4 150.3 L1704.3 150.3 L1719.3 145.7 L1725.7 148.9 L1736.4 144.6 L1750 151 L1757.1 151 L1763.6 155.3 L1768.6 148.9 L1775 148.9 L1784.3 131 L1787.9 133.1 L1805.7 118.9 L1810.7 136 L1815.7 124.6 L1832.1 124.6 L1841.4 108.1 L1847.9 108.1 L1854.3 126 L1858.6 126 L1865.7 116.7 L1875 121.7 L1886.4 101.7 L1886.4 171 L1679.3 171 Z" fill="url(#gfill2)"/>
 <g stroke="#93adbc" stroke-width="1.3" fill="none">
  <path d="M1886.9 91 V177.4"/><path d="M1673 171 H1894"/>
  <path d="M1677.9 171V177.4M1698.8 171V177.4M1719.7 171V177.4M1740.6 171V177.4M1761.5 171V177.4M1782.4 171V177.4M1803.3 171V177.4M1824.2 171V177.4M1845.1 171V177.4M1866 171V177.4"/>
  <path d="M1886.9 108.5H1894M1886.9 129.5H1894M1886.9 150.3H1894"/>
 </g>
 <path d="M1757.9 118.9 H1792.5" stroke="#7a7a7a" stroke-width="1.4"/>
 <path d="M1679.3 148.1 L1682.9 146 L1691.4 150.3 L1704.3 150.3 L1719.3 145.7 L1725.7 148.9 L1736.4 144.6 L1750 151 L1757.1 151 L1763.6 155.3 L1768.6 148.9 L1775 148.9 L1784.3 131 L1787.9 133.1 L1805.7 118.9 L1810.7 136 L1815.7 124.6 L1832.1 124.6 L1841.4 108.1 L1847.9 108.1 L1854.3 126 L1858.6 126 L1865.7 116.7 L1875 121.7 L1886.4 101.7" fill="none" stroke="#089c08" stroke-width="5.4" stroke-linejoin="round"/>
 <path d="M1679.3 148.1 L1682.9 146 L1691.4 150.3 L1704.3 150.3 L1719.3 145.7 L1725.7 148.9 L1736.4 144.6 L1750 151 L1757.1 151 L1763.6 155.3 L1768.6 148.9 L1775 148.9 L1784.3 131 L1787.9 133.1 L1805.7 118.9 L1810.7 136 L1815.7 124.6 L1832.1 124.6 L1841.4 108.1 L1847.9 108.1 L1854.3 126 L1858.6 126 L1865.7 116.7 L1875 121.7 L1886.4 101.7" fill="none" stroke="#0cd40c" stroke-width="3.2" stroke-linejoin="round"/>
 <path d="M1792.1 118.9 H1886.4" stroke="#1010f0" stroke-width="1.8"/>
 <!-- red arrows down -->
 <path d="M1803 99.6 h5.4 v5.4 h2.5 l-5.2 6 l-5.2 -6 h2.5 z" fill="url(#redg)"/>
 <path d="M1843 91.4 h5.4 v5.4 h2.5 l-5.2 6 l-5.2 -6 h2.5 z" fill="url(#redg)"/>
 <!-- green arrows up -->
 <path d="M1793.3 137.4 l5.4 6 h-2.6 v6.2 h-5.6 v-6.2 h-2.6 z" fill="#0fb80f"/>
 <path d="M1833.3 131 l5.4 6 h-2.6 v6 h-5.6 v-6 h-2.6 z" fill="#0fb80f"/>
 <!-- red curved arrow -->
 <path d="M1702.6 99.6 C1692 92.5 1680.6 99 1679 118.2 L1673.1 118.2 L1683.1 130.4 L1693 118.2 L1687.4 118.2 C1688.4 107 1693.5 101.4 1702.6 103.2 Z" fill="url(#redg)"/>
 <!-- green curved arrow -->
 <path d="M1741.2 125.6 C1747.5 127 1750.6 123 1750.6 109.8 L1745 109.8 L1754.7 97.4 L1764.4 109.8 L1758.8 109.8 C1759.4 127 1752.4 133.6 1741.2 130.4 Z" fill="url(#grng)"/>
 <!-- gears -->
 <path d="M1738.8 102.2 L1741.5 103.2 L1740.8 105.7 L1737.9 104.9 L1736.9 106.4 L1738.6 108.8 L1736.5 110.4 L1734.6 108.1 L1732.9 108.6 L1732.8 111.6 L1730.3 111.6 L1730.1 108.7 L1728.3 108.1 L1726.6 110.5 L1724.5 109.0 L1726.1 106.5 L1725.0 105.1 L1722.1 105.9 L1721.3 103.5 L1724.1 102.4 L1724.0 100.6 L1721.3 99.6 L1722.0 97.1 L1724.9 97.9 L1725.9 96.4 L1724.2 94.0 L1726.3 92.4 L1728.2 94.7 L1729.9 94.2 L1730.0 91.2 L1732.5 91.2 L1732.7 94.1 L1734.5 94.7 L1736.2 92.3 L1738.3 93.8 L1736.7 96.3 L1737.8 97.7 L1740.7 96.9 L1741.5 99.3 L1738.7 100.4 Z M1735.2 101.4 A3.8 3.8 0 1 0 1727.6 101.4 A3.8 3.8 0 1 0 1735.2 101.4 Z" fill="url(#gearg)" fill-rule="evenodd"/>
 <path d="M1738.7 124.6 L1741.6 124.7 L1741.6 127.3 L1738.7 127.4 L1738.1 129.2 L1740.4 131.0 L1738.9 133.1 L1736.5 131.4 L1735.0 132.5 L1735.8 135.3 L1733.3 136.1 L1732.3 133.3 L1730.5 133.3 L1729.5 136.1 L1727.0 135.3 L1727.8 132.5 L1726.3 131.4 L1723.9 133.1 L1722.4 131.0 L1724.7 129.2 L1724.1 127.4 L1721.2 127.3 L1721.2 124.7 L1724.1 124.6 L1724.7 122.8 L1722.4 121.0 L1723.9 118.9 L1726.3 120.6 L1727.8 119.5 L1727.0 116.7 L1729.5 115.9 L1730.5 118.7 L1732.3 118.7 L1733.3 115.9 L1735.8 116.7 L1735.0 119.5 L1736.5 120.6 L1738.9 118.9 L1740.4 121.0 L1738.1 122.8 Z M1735.2 126.0 A3.8 3.8 0 1 0 1727.6 126.0 A3.8 3.8 0 1 0 1735.2 126.0 Z" fill="url(#gearg)" fill-rule="evenodd"/>
 <path d="M1721.3 113.0 L1725.0 113.5 L1724.6 117.1 L1720.9 116.9 L1719.8 119.3 L1722.5 122.0 L1720.1 124.7 L1717.1 122.3 L1714.9 123.7 L1715.5 127.4 L1712.0 128.1 L1711.0 124.5 L1708.3 124.2 L1706.6 127.6 L1703.4 126.2 L1704.7 122.6 L1702.7 120.9 L1699.4 122.6 L1697.5 119.5 L1700.7 117.4 L1700.1 114.8 L1696.4 114.3 L1696.8 110.7 L1700.5 110.9 L1701.6 108.5 L1698.9 105.8 L1701.3 103.1 L1704.3 105.5 L1706.5 104.1 L1705.9 100.4 L1709.4 99.7 L1710.4 103.3 L1713.1 103.6 L1714.8 100.2 L1718.0 101.6 L1716.7 105.2 L1718.7 106.9 L1722.0 105.2 L1723.9 108.3 L1720.7 110.4 Z M1716.3 113.9 A5.6 5.6 0 1 0 1705.1 113.9 A5.6 5.6 0 1 0 1716.3 113.9 Z" fill="url(#gearg)" fill-rule="evenodd"/>
</svg>
<!-- FORM -->
<style>
.dis{position:absolute;height:36px;border:1px solid #8aa2af;border-radius:4px;background:#cfdee6;box-shadow:inset 0 0 0 1px #dbe6ec}
.gt{color:#738b99}
.cb{position:absolute;width:23px;height:23px;background:#fff;border:1px solid #8e9aa3}
.cbd{position:absolute;width:23px;height:23px;background:#cfdee6;border:1px solid #a3b3bd}
.rad{position:absolute;width:25px;height:25px;border-radius:50%;background:radial-gradient(circle at 50% 40%,#fff 60%,#eef1f3 100%);border:1px solid #70808a}
.dot{position:absolute;width:9.4px;height:9.4px;border-radius:50%;background:#000}
.arrbtn{position:absolute;width:30px;height:30px;border:1px solid #8aa2af;border-radius:3px;background:#cfdee6}
</style>
<div class="b" style="left:1496px;top:199px;letter-spacing:0.07px">Germany 30 (DFB) - 5 minutes</div>
<div class="b" style="left:1485.6px;top:238px;letter-spacing:0.18px">Initial capital :</div>
<div class="abs" style="left:1648px;top:233px;width:158px;height:36px;background:#fff;border:1px solid #8ea6b4;border-radius:4px"></div>
<div class="b" style="left:1652px;top:238px">10000</div>
<div class="b" style="left:1811px;top:238px">£</div>
<div class="b" style="left:1418.6px;top:275px;letter-spacing:0.1px">Estimated brokerage fees</div>
<!-- row 1 -->
<div class="cb" style="left:1423px;top:318px"></div>
<div class="b" style="left:1452px;top:315px">Order fee :</div>
<div class="dis" style="left:1577px;top:310px;width:120px"></div><div class="b gt" style="left:1580px;top:315px">0</div>
<div class="dis" style="left:1702px;top:310px;width:190px"></div><div class="b gt" style="left:1706px;top:315px">£ / order</div>
<div class="arrbtn" style="left:1859px;top:313px"></div>
<svg class="abs" style="left:1859px;top:313px" width="30" height="30"><path d="M7 11.5 H23 L15 20 Z" fill="#dde7ec" stroke="#8fa3af" stroke-width="1.2" stroke-linejoin="round"/></svg>
<!-- row 2 -->
<div class="cbd" style="left:1488px;top:359px"></div>
<div class="b gt" style="left:1517px;top:356px;color:#8195a1">Min:</div>
<div class="dis" style="left:1577px;top:351px;width:120px"></div><div class="b gt" style="left:1580px;top:356px">0</div>
<div class="dis" style="left:1702px;top:351px;width:190px"></div><div class="b gt" style="left:1706px;top:356px">£ / order</div>
<div class="arrbtn" style="left:1859px;top:354px"></div>
<svg class="abs" style="left:1859px;top:354px" width="30" height="30"><path d="M7 11.5 H23 L15 20 Z" fill="#dde7ec" stroke="#8fa3af" stroke-width="1.2" stroke-linejoin="round"/></svg>
<!-- row 3 -->
<div class="cbd" style="left:1488px;top:400px"></div>
<div class="b gt" style="left:1517px;top:397px;color:#8195a1">Max:</div>
<div class="dis" style="left:1577px;top:392px;width:120px"></div><div class="b gt" style="left:1580px;top:397px">0</div>
<div class="dis" style="left:1702px;top:392px;width:190px"></div><div class="b gt" style="left:1706px;top:397px">£ / order</div>
<div class="arrbtn" style="left:1859px;top:395px"></div>
<svg class="abs" style="left:1859px;top:395px" width="30" height="30"><path d="M7 11.5 H23 L15 20 Z" fill="#dde7ec" stroke="#8fa3af" stroke-width="1.2" stroke-linejoin="round"/></svg>
<!-- spread -->
<div class="cb" style="left:1423px;top:441px"></div>
<svg class="abs" style="left:1420px;top:434px" width="36" height="32" viewBox="1420 434 36 32"><path d="M1424.7 454.2 L1427 451.3 L1434.3 455 C1438.4 447.4 1443.4 441.6 1449.8 437 L1450 439.9 C1444.4 445.6 1440 452 1435.9 460.5 L1433.3 460.5 Z" fill="#000"/></svg>
<div class="b" style="left:1452px;top:438px">Spread:</div>
<div class="abs" style="left:1577px;top:433px;width:120px;height:36px;background:#fff;border:1px solid #8ea6b4;border-radius:4px"></div>
<div class="b" style="left:1577px;top:438px;width:100px;text-align:right">1.8</div>
<div class="abs" style="left:1679px;top:436px;width:15px;height:15px;background:linear-gradient(#d8e6ee,#b3cddb);border-radius:2px 2px 0 0"></div>
<div class="abs" style="left:1679px;top:451px;width:15px;height:15px;background:linear-gradient(#c4d9e4,#9fbdcd);border-radius:0 0 2px 2px"></div>
<svg class="abs" style="left:1679px;top:436px" width="15" height="30"><path d="M4 9.5 L7.5 5.5 L11 9.5 Z M4 21 L7.5 25 L11 21 Z" fill="#000"/></svg>
<div class="b" style="left:1702px;top:438px">points</div>
<!-- time period -->
<div class="b" style="left:1420px;top:476px">Time period</div>
<div class="b" style="left:1419px;top:510px;letter-spacing:0.2px">Starting date :</div>
<div class="rad" style="left:1584px;top:511px"></div><div class="dot" style="left:1591.9px;top:518.8px"></div>
<div class="b" style="left:1613px;top:510px;letter-spacing:0.12px">Earliest date displayed</div>
<div class="rad" style="left:1584px;top:555px"></div>
<div class="b" style="left:1613px;top:554px;letter-spacing:0.15px">28-Mar-2017 11:07:35</div>
<div class="b" style="left:1419px;top:603px;letter-spacing:0.2px">Ending date :</div>
<div class="rad" style="left:1584px;top:604px"></div><div class="dot" style="left:1591.9px;top:611.8px"></div>
<div class="b" style="left:1613px;top:603px;letter-spacing:0.22px">Real-time date</div>
<div class="rad" style="left:1584px;top:648px"></div>
<div class="b" style="left:1613px;top:647px;letter-spacing:0.15px">28-Mar-2017 11:07:35</div>
<!-- separator -->
<div class="abs" style="left:1411px;top:697px;width:495px;height:1px;background:#8aa6b6"></div>
<div class="abs" style="left:1411px;top:698px;width:495px;height:1px;background:#e3edf2"></div>
<!-- tick mode -->
<div class="cb" style="left:1423px;top:718px"></div>
<svg class="abs" style="left:1420px;top:711px" width="36" height="32" viewBox="1420 434 36 32"><path d="M1424.7 454.2 L1427 451.3 L1434.3 455 C1438.4 447.4 1443.4 441.6 1449.8 437 L1450 439.9 C1444.4 445.6 1440 452 1435.9 460.5 L1433.3 460.5 Z" fill="#000"/></svg>
<div class="b" style="left:1451.6px;top:715px;letter-spacing:0.06px">ProBacktest in tick by tick mode</div>
<!-- bottom -->
<div class="cb" style="left:1540px;top:1010px;width:24px;height:24px"></div>
<div class="b" style="left:1568.5px;top:1007px;letter-spacing:0.3px">Keep window open</div>
<div class="abs" style="left:1516px;top:1046px;width:289px;height:38px;border:1px solid #8e9ba3;border-radius:4px;background:linear-gradient(#ffffff,#f7f7f7 55%,#e9e9e9)"></div>
<div class="b" style="left:1531.5px;top:1052px;letter-spacing:-0.08px">ProBacktest my system</div>
<!-- h scrollbar -->
<div class="abs" style="left:1411px;top:1093px;width:497px;height:30px;background:#9ebbcd;border-top:1px solid #7f9aab"></div>
<div class="abs" style="left:1411px;top:1093px;width:32px;height:34px;border:1px solid #7f9aab;border-radius:4px;background:linear-gradient(#c8e2ee,#b4d0de 50%,#a3c1d2);box-shadow:inset 1px 1px 0 #d3e7f0"></div>
<svg class="abs" style="left:1411px;top:1093px" width="32" height="26"><path d="M21 8 L21 27 L11.8 17.5 Z" fill="#000"/></svg>
<div class="abs" style="left:1444px;top:1093px;width:424px;height:34px;border:1px solid #7f9aab;border-radius:4px;background:linear-gradient(#c4deea,#b0cddc 50%,#a2c0d1);box-shadow:inset 1px 1px 0 #d3e7f0"></div>
<svg class="abs" style="left:1650px;top:1104px" width="10" height="10"><path d="M1 2.5H8M1 4.5H8M1 6.5H8" stroke="#6f8fa3" stroke-width="1"/></svg>
<div class="abs" style="left:1873px;top:1093px;width:32px;height:34px;border:1px solid #7f9aab;border-radius:4px;background:linear-gradient(#c8e2ee,#b4d0de 50%,#a3c1d2);box-shadow:inset 1px 1px 0 #d3e7f0"></div>
<svg class="abs" style="left:1873px;top:1093px" width="32" height="26"><path d="M12 8 L12 27 L21.2 17.5 Z" fill="#000"/></svg>
<!-- calendars + bubble -->
<svg class="abs" style="left:1852px;top:545px" width="48" height="48" viewBox="1852 545 48 48">
 <rect x="1856.2" y="558" width="39.2" height="29" fill="#e9f0f4" stroke="#c4d4de" stroke-width="1"/>
 <rect x="1855" y="550" width="41.8" height="10" rx="1" fill="#8dbada"/>
 <rect x="1855" y="558.6" width="41.8" height="1.6" fill="#a5c6de"/>
 <rect x="1864" y="546.9" width="2.8" height="9.6" rx="1.3" fill="#cfd9df" stroke="#b3c2cb" stroke-width=".5"/>
 <rect x="1884.7" y="546.9" width="2.8" height="9.6" rx="1.3" fill="#cfd9df" stroke="#b3c2cb" stroke-width=".5"/>
 <rect x="1858.8" y="563.6" width="34.2" height="19.6" fill="#d3e1ea"/>
 <g fill="#f3f7f9"><rect x="1859.8" y="564.6" width="5.4" height="5"/><rect x="1866.4" y="564.6" width="5.4" height="5"/><rect x="1873.0" y="564.6" width="5.4" height="5"/><rect x="1879.6" y="564.6" width="5.4" height="5"/><rect x="1886.2" y="564.6" width="5.4" height="5"/><rect x="1859.8" y="570.7" width="5.4" height="5"/><rect x="1866.4" y="570.7" width="5.4" height="5"/><rect x="1873.0" y="570.7" width="5.4" height="5"/><rect x="1879.6" y="570.7" width="5.4" height="5"/><rect x="1886.2" y="570.7" width="5.4" height="5"/><rect x="1859.8" y="576.8" width="5.4" height="5"/><rect x="1866.4" y="576.8" width="5.4" height="5"/><rect x="1873.0" y="576.8" width="5.4" height="5"/><rect x="1879.6" y="576.8" width="5.4" height="5"/><rect x="1886.2" y="576.8" width="5.4" height="5"/></g>
 <rect x="1866.4" y="569.7" width="6.8" height="6.8" fill="#f3eef0" stroke="#f0939d" stroke-width="1.6"/>
</svg>
<svg class="abs" style="left:1852px;top:638px" width="48" height="48" viewBox="1852 545 48 48">
 <rect x="1856.2" y="558" width="39.2" height="29" fill="#e9f0f4" stroke="#c4d4de" stroke-width="1"/>
 <rect x="1855" y="550" width="41.8" height="10" rx="1" fill="#8dbada"/>
 <rect x="1855" y="558.6" width="41.8" height="1.6" fill="#a5c6de"/>
 <rect x="1864" y="546.9" width="2.8" height="9.6" rx="1.3" fill="#cfd9df" stroke="#b3c2cb" stroke-width=".5"/>
 <rect x="1884.7" y="546.9" width="2.8" height="9.6" rx="1.3" fill="#cfd9df" stroke="#b3c2cb" stroke-width=".5"/>
 <rect x="1858.8" y="563.6" width="34.2" height="19.6" fill="#d3e1ea"/>
 <g fill="#f3f7f9"><rect x="1859.8" y="564.6" width="5.4" height="5"/><rect x="1866.4" y="564.6" width="5.4" height="5"/><rect x="1873.0" y="564.6" width="5.4" height="5"/><rect x="1879.6" y="564.6" width="5.4" height="5"/><rect x="1886.2" y="564.6" width="5.4" height="5"/><rect x="1859.8" y="570.7" width="5.4" height="5"/><rect x="1866.4" y="570.7" width="5.4" height="5"/><rect x="1873.0" y="570.7" width="5.4" height="5"/><rect x="1879.6" y="570.7" width="5.4" height="5"/><rect x="1886.2" y="570.7" width="5.4" height="5"/><rect x="1859.8" y="576.8" width="5.4" height="5"/><rect x="1866.4" y="576.8" width="5.4" height="5"/><rect x="1873.0" y="576.8" width="5.4" height="5"/><rect x="1879.6" y="576.8" width="5.4" height="5"/><rect x="1886.2" y="576.8" width="5.4" height="5"/></g>
 <rect x="1866.4" y="569.7" width="6.8" height="6.8" fill="#f3eef0" stroke="#f0939d" stroke-width="1.6"/>
</svg>
<svg class="abs" style="left:1806px;top:710px" width="36" height="36" viewBox="1806 710 36 36">
 <defs><radialGradient id="bub" cx="0.52" cy="0.52" r="0.62"><stop offset="0" stop-color="#33d4fa"/><stop offset="0.75" stop-color="#1e9cf2"/><stop offset="1" stop-color="#1388ee"/></radialGradient>
 <linearGradient id="bubh" x1="0" y1="0" x2="0" y2="1"><stop offset="0" stop-color="#ffffff" stop-opacity=".9"/><stop offset="1" stop-color="#ffffff" stop-opacity="0"/></linearGradient></defs>
 <path d="M1826 735.2 L1831.9 741 L1830.6 734 Z" fill="#1588ee"/>
 <ellipse cx="1823.6" cy="726.4" rx="12.7" ry="10.7" fill="url(#bub)"/>
 <ellipse cx="1823.6" cy="721.6" rx="9.6" ry="4.6" fill="url(#bubh)"/>
</svg>
</body></html>
